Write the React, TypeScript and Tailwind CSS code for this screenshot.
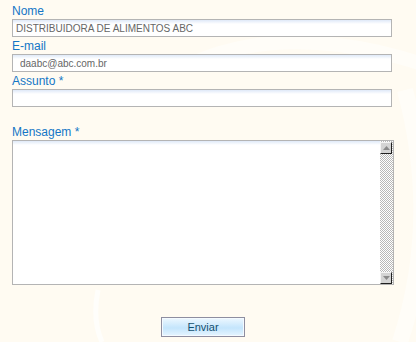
import React from "react";

const labelCls =
  "block h-[15px] text-[12px] leading-[14px] text-[#1476c6] font-['Liberation_Sans',Arial,sans-serif]";
const inputCls =
  "block w-[380px] h-[18px] border border-[#b4b4b4] px-[3px] text-[10px] text-[#666666] outline-none font-['Liberation_Sans',Arial,sans-serif] bg-[linear-gradient(#dfe9f8,#ffffff_4px)]";

function ScrollButton({ down }: { down?: boolean }) {
  return (
    <div className="h-[12px] w-[12px] bg-[#d4d4d4] border-t border-l border-t-[#f4f4f4] border-l-[#f4f4f4] border-b border-r border-b-[#202020] border-r-[#202020] flex items-center justify-center">
      <svg width="7" height="4" viewBox="0 0 7 4">
        {down ? (
          <polygon points="0,0 7,0 3.5,4" fill="#8a8a8a" />
        ) : (
          <polygon points="0,4 7,4 3.5,0" fill="#8a8a8a" />
        )}
      </svg>
    </div>
  );
}

export default function App() {
  return (
    <div className="relative w-[416px] h-[342px] overflow-hidden bg-[#fffbf2] font-['Liberation_Sans',Arial,sans-serif]">
      <svg
        className="absolute inset-0 pointer-events-none"
        width="416"
        height="342"
        viewBox="0 0 416 342"
      >
        <path d="M200 60 Q300 20 440 70" stroke="#fffdf8" strokeWidth="14" fill="none" />
        <path d="M405 90 Q440 220 400 342" stroke="#fffdf8" strokeWidth="16" fill="none" />
        <path d="M98 290 Q92 320 102 342" stroke="#fffefb" strokeWidth="5" fill="none" />
      </svg>
      <form className="relative pt-[4px] pl-[12px] w-[394px]" onSubmit={(e) => e.preventDefault()}>
        <label className={labelCls}>Nome</label>
        <input className={inputCls} defaultValue="DISTRIBUIDORA DE ALIMENTOS ABC" />
        <div className="h-[2px]" />
        <label className={labelCls}>E-mail</label>
        <input className={inputCls + " pl-[7px]"} defaultValue="daabc@abc.com.br" />
        <div className="h-[2px]" />
        <label className={labelCls}>Assunto *</label>
        <input className={inputCls} defaultValue="" />
        <div className="h-[18px]" />
        <label className={labelCls}>Mensagem *</label>
        <div className="flex w-[382px] h-[145px] border border-[#b4b4b4] bg-white">
          <textarea className="flex-1 resize-none outline-none bg-[linear-gradient(#dfe9f8,#ffffff_4px)] text-[10px]" />
          <div className="w-[13px] flex flex-col pt-[1px] [background-image:repeating-conic-gradient(#b8b8b8_0_25%,#ffffff_0_50%)] [background-size:2px_2px]">
            <ScrollButton />
            <div className="flex-1" />
            <ScrollButton down />
          </div>
        </div>
        <div className="flex justify-center mt-[32px] w-[382px]">
          <button
            type="submit"
            className="w-[84px] h-[20px] border border-[#8e8ea0] shadow-[inset_0_0_0_1px_#f4faff] bg-[linear-gradient(#eef8ff,#c4e5fc_55%,#e6f5ff)] text-[11px] text-[#13506f] leading-[18px] font-['Liberation_Sans',Arial,sans-serif]"
          >
            Enviar
          </button>
        </div>
      </form>
    </div>
  );
}
